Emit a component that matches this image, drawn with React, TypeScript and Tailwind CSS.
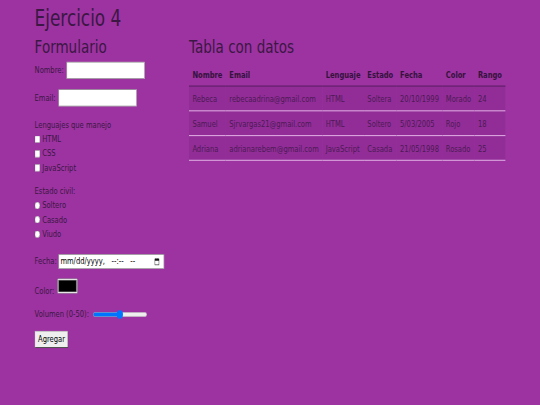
import React from "react";

type Fila = {
  nombre: string;
  email: string;
  lenguaje: string;
  estado: string;
  fecha: string;
  color: string;
  rango: string;
};

const filas: Fila[] = [
  { nombre: "Rebeca", email: "rebecaadrina@gmail.com", lenguaje: "HTML", estado: "Soltera", fecha: "20/10/1999", color: "Morado", rango: "24" },
  { nombre: "Samuel", email: "Sjrvargas21@gmail.com", lenguaje: "HTML", estado: "Soltero", fecha: "5/03/2005", color: "Rojo", rango: "18" },
  { nombre: "Adriana", email: "adrianarebem@gmail.com", lenguaje: "JavaScript", estado: "Casada", fecha: "21/05/1998", color: "Rosado", rango: "25" },
];

const columnas = ["Nombre", "Email", "Lenguaje", "Estado", "Fecha", "Color", "Rango"];

function CalendarIcon() {
  return (
    <svg width="12" height="14" viewBox="0 0 12 14" className="shrink-0">
      <rect x="1" y="2.5" width="10" height="10.5" fill="none" stroke="#111" strokeWidth="1.3" />
      <rect x="1" y="2.5" width="10" height="3" fill="#111" />
      <rect x="3" y="0.5" width="1.4" height="3" fill="#111" />
      <rect x="7.6" y="0.5" width="1.4" height="3" fill="#111" />
    </svg>
  );
}

function Opcion({ tipo, nombre, texto }: { tipo: "checkbox" | "radio"; nombre: string; texto: string }) {
  return (
    <label className="flex h-[25.5px] items-center gap-[5px]">
      <input type={tipo} name={nombre} className="h-[13px] w-[13px]" />
      <span>{texto}</span>
    </label>
  );
}

function Formulario() {
  return (
    <div className="w-[366px] shrink-0">
      <h2 className="mb-2 text-[32px] leading-[38.4px]">Formulario</h2>

      <div className="mt-[3.5px] flex h-[30px] items-center gap-[7px]">
        <span>Nombre:</span>
        <input type="text" className="h-[30px] w-[185px] border border-[#767676] bg-white px-[2px] text-black" />
      </div>

      <div className="mt-[19px] flex h-[30px] items-center gap-[7px]">
        <span>Email:</span>
        <input type="email" className="h-[30px] w-[185px] border border-[#767676] bg-white px-[2px] text-black" />
      </div>

      <div className="mt-[21.5px]">
        <p>Lenguajes que manejo</p>
        <Opcion tipo="checkbox" nombre="html" texto="HTML" />
        <Opcion tipo="checkbox" nombre="css" texto="CSS" />
        <Opcion tipo="checkbox" nombre="js" texto="JavaScript" />
      </div>

      <div className="mt-[17px]">
        <p>Estado civil:</p>
        <Opcion tipo="radio" nombre="estado" texto="Soltero" />
        <Opcion tipo="radio" nombre="estado" texto="Casado" />
        <Opcion tipo="radio" nombre="estado" texto="Viudo" />
      </div>

      <div className="mt-[23px] flex h-[26px] items-center gap-[5px]">
        <span>Fecha:</span>
        <div className="flex h-[26px] w-[250px] items-center border border-[#767676] bg-white pl-[3px] pr-[10px] text-black">
          <span>mm/dd/yyyy,</span>
          <span className="ml-[16px]">--:--</span>
          <span className="ml-[16px]">--</span>
          <span className="flex-1" />
          <CalendarIcon />
        </div>
      </div>

      <div className="mt-[17px]">
        <span>Color: </span>
        <span className="ml-[2px] inline-block h-[27px] w-[48px] rounded-[2px] border border-[#767676] bg-[#efefef] p-[2px] align-baseline">
          <span className="block h-full w-full border border-[#666] bg-black" />
        </span>
      </div>

      <div className="mt-[18px] flex h-[24px] items-center gap-[9px]">
        <span>Volumen (0-50):</span>
        <input type="range" min={0} max={50} defaultValue={25} className="w-[129px]" />
      </div>

      <button className="mt-[17px] h-[31px] w-[80px] rounded-[2px] border-2 border-t-[#c4c4c4] border-l-[#c4c4c4] border-r-[#4a4a4a] border-b-[#4a4a4a] bg-[#efefef] px-[6px] text-black">
        Agregar
      </button>
    </div>
  );
}

function Tabla() {
  return (
    <div className="flex-1">
      <h2 className="mb-2 text-[32px] leading-[38.4px]">Tabla con datos</h2>
      <table className="w-full border-collapse text-left">
        <thead>
          <tr className="border-b-2 border-[#5e1f66]">
            {columnas.map((c) => (
              <th key={c} className="whitespace-nowrap px-[8px] pt-[12px] pb-[8px] font-bold leading-[22px] text-[#34123c]">
                {c}
              </th>
            ))}
          </tr>
        </thead>
        <tbody>
          {filas.map((f) => (
            <tr key={f.nombre} className="border-b-2 border-[#d9a2dd] bg-[#922d98] text-[#4c1a54]">
              <td className="whitespace-nowrap px-[8px] pt-[11px] pb-[8px] leading-[23px]">{f.nombre}</td>
              <td className="whitespace-nowrap px-[8px] pt-[11px] pb-[8px] leading-[23px]">{f.email}</td>
              <td className="whitespace-nowrap px-[8px] pt-[11px] pb-[8px] leading-[23px]">{f.lenguaje}</td>
              <td className="whitespace-nowrap px-[8px] pt-[11px] pb-[8px] leading-[23px]">{f.estado}</td>
              <td className="whitespace-nowrap px-[8px] pt-[11px] pb-[8px] leading-[23px]">{f.fecha}</td>
              <td className="whitespace-nowrap px-[8px] pt-[11px] pb-[8px] leading-[23px]">{f.color}</td>
              <td className="whitespace-nowrap px-[8px] pt-[11px] pb-[8px] leading-[23px]">{f.rango}</td>
            </tr>
          ))}
        </tbody>
      </table>
    </div>
  );
}

export default function App() {
  // the reference is a 1280x720 page squeezed into 540x405
  return (
    <div className="h-screen w-full overflow-hidden bg-[#9d33a1]">
      <div className="h-[720px] w-[1280px] origin-top-left scale-x-[0.421875] scale-y-[0.5625] px-[82px] pt-[8px] font-['DejaVu_Sans',sans-serif] text-[16px] leading-[24px] text-[#3b1744]">
        <h1 className="mb-2 text-[40px] leading-[48px]">Ejercicio 4</h1>
        <div className="flex">
          <Formulario />
          <Tabla />
        </div>
      </div>
    </div>
  );
}
